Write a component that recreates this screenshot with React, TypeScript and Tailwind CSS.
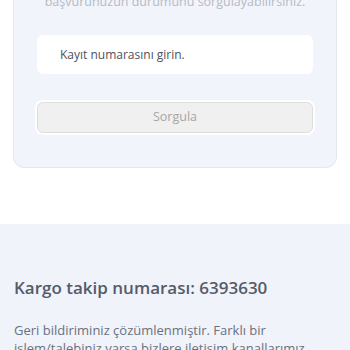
export default function App() {
  const font = { fontFamily: '"Open Sans", "Noto Sans", sans-serif' };
  return (
    <div className="w-[350px] h-[350px] overflow-hidden bg-white" style={font}>
      <div className="px-[13px] -mt-[11px]">
        <div className="bg-[#f1f4fb] border border-[#e4e7ee] rounded-[11px] px-[23px] pb-[34px]">
          <p className="text-[12.5px] leading-[24px] text-[#b5bac4] text-center whitespace-nowrap">başvurunuzun durumunu sorgulayabilirsiniz.</p>
          <div className="mt-[21px] h-[39px] w-full bg-white rounded-[6px] flex items-center pl-[23px] pr-[10px] text-[12px] text-[#4d525c]">
            <span>Kayıt numarasını girin.</span>
          </div>
          <button className="mt-[28px] w-full h-[31px] bg-[#f0f0f0] border border-[#dedede] rounded-[6px] shadow-[0_0_0_2px_#ffffff] text-[12.5px] text-[#a6a6a6] flex items-center justify-center">
            Sorgula
          </button>
        </div>
      </div>
      <div className="mt-[56px] bg-[#f0f3fa] px-[14px] pt-[50px] pb-[40px]">
        <h2 className="text-[17px] leading-[27px] font-semibold text-[#555b68]">Kargo takip numarası: 6393630</h2>
        <p className="mt-[20px] text-[13px] leading-[18px] text-[#6b717d]">
          Geri bildiriminiz çözümlenmiştir. Farklı bir işlem/talebiniz varsa bizlere iletişim kanallarımız üzerinden ulaşabilirsiniz.
        </p>
      </div>
    </div>
  );
}
